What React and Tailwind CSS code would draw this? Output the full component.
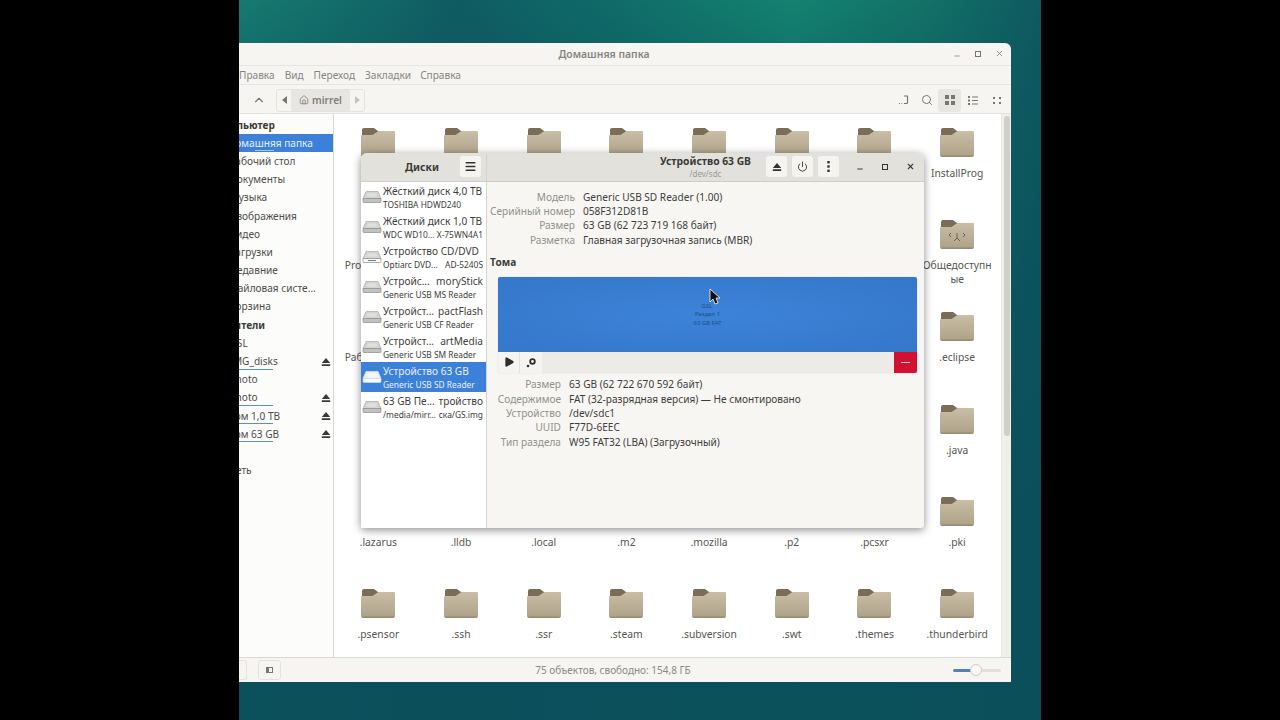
import React from "react";
import { Menu, Power, Search, House, ChevronUp, X, Minus, Play } from "lucide-react";

const Folder = ({ shared }) => (
  <svg width="36" height="32" viewBox="0 0 36 32" className="block">
    <defs>
      <linearGradient id="fb" x1="0" y1="0" x2="0" y2="1">
        <stop offset="0" stopColor="#c9bea6" />
        <stop offset="0.9" stopColor="#b0a48a" />
        <stop offset="1" stopColor="#8f856e" />
      </linearGradient>
    </defs>
    <path d="M2 3q0-2 2-2h10l4 3h15q1 0 1 1v6H2z" fill="#7a6d58" />
    <path d="M1 9q0-1 1-1h10q1 0 2-1l3-2q1-1 2-1h15q1 0 1 1v23q0 2-2 2H3q-2 0-2-2z" fill="url(#fb)" />
    {shared && (
      <g stroke="#6d6352" strokeWidth="1" fill="none">
        <path d="M12 14l-2 2 2 2M24 14l2 2-2 2M15 22l3-3 3 3M18 19v-5" />
      </g>
    )}
  </svg>
);

const Eject = ({ className = "" }) => (
  <svg width="10" height="10" viewBox="0 0 10 10" className={className}>
    <path d="M5 1l4.2 5H.8z M.8 7.2h8.4V9H.8z" fill="currentColor" />
  </svg>
);

const Drive = ({ cd, light }) => (
  <svg width="20" height="16" viewBox="0 0 20 16" className="shrink-0">
    <path d="M4 2.5h12l3 7H1z" fill={light ? "#eef0f2" : "#d4d4d0"} stroke={light ? "#dfe3e8" : "#a9a9a5"} strokeWidth="0.7" />
    <ellipse cx="10" cy="6" rx="5" ry="1.8" fill={light ? "#f7f7f7" : "#e0e0dd"} />
    <path d="M1 9.5h18v3q0 1-1 1H2q-1 0-1-1z" fill={cd ? "#fbfbfa" : light ? "#fafafa" : "#c2c2bf"} stroke={light ? "#cfd8e6" : "#8a8a87"} strokeWidth="0.7" />
    {cd && <path d="M6 11.5h8" stroke="#777" strokeWidth="1" />}
  </svg>
);

const folders = [
  ["", "", "", "", "", "", "", "InstallProg"],
  ["Programming", "", "", "", "", "", "", "Общедоступные"],
  ["Рабочий стол", "", "", "", "", "", "", ".eclipse"],
  ["", "", "", "", "", "", "", ".java"],
  [".lazarus", ".lldb", ".local", ".m2", ".mozilla", ".p2", ".pcsxr", ".pki"],
  [".psensor", ".ssh", ".ssr", ".steam", ".subversion", ".swt", ".themes", ".thunderbird"],
];

const side = [
  { t: "Компьютер", head: true },
  { t: "Домашняя папка", sel: true, bar: true },
  { t: "Рабочий стол" },
  { t: "Документы" },
  { t: "Музыка" },
  { t: "Изображения" },
  { t: "Видео" },
  { t: "Загрузки" },
  { t: "Недавние" },
  { t: "Файловая систе..." },
  { t: "Корзина" },
  { t: "Носители", head: true },
  { t: "GSL" },
  { t: "IMG_disks", eject: true, bar: true },
  { t: "Photo" },
  { t: "Photo", eject: true, bar: true },
  { t: "Том 1,0 ТВ", eject: true, bar: true },
  { t: "Том 63 GB", eject: true, bar: true },
  { t: "" },
  { t: "Сеть" },
];

const disks = [
  { a: ["Жёсткий диск 4,0 ТВ"], b: ["TOSHIBA HDWD240"] },
  { a: ["Жёсткий диск 1,0 ТВ"], b: ["WDC WD10...", "X-75WN4A1"] },
  { a: ["Устройство CD/DVD"], b: ["Optiarc DVD...", "AD-5240S"], k: "cd" },
  { a: ["Устройс...", "moryStick"], b: ["Generic USB MS Reader"] },
  { a: ["Устройст...", "pactFlash"], b: ["Generic USB CF Reader"] },
  { a: ["Устройст...", "artMedia"], b: ["Generic USB SM Reader"] },
  { a: ["Устройство 63 GB"], b: ["Generic USB SD Reader"], k: "sel" },
  { a: ["63 GB Пе...", "тройство"], b: ["/media/mirr...", "ска/GS.img"] },
];

const info1 = [
  ["Модель", "Generic USB SD Reader (1.00)"],
  ["Серийный номер", "058F312D81B"],
  ["Размер", "63 GB (62 723 719 168 байт)"],
  ["Разметка", "Главная загрузочная запись (MBR)"],
];
const info2 = [
  ["Размер", "63 GB (62 722 670 592 байт)"],
  ["Содержимое", "FAT (32-разрядная версия) — Не смонтировано"],
  ["Устройство", "/dev/sdc1"],
  ["UUID", "F77D-6EEC"],
  ["Тип раздела", "W95 FAT32 (LBA) (Загрузочный)"],
];

const HBtn = ({ children }) => (
  <div className="w-[21px] h-[21px] rounded-[3px] bg-[#f5f4f1] flex items-center justify-center text-[#33332f]">{children}</div>
);

export default function App() {
  return (
    <div className="h-screen w-full bg-black flex justify-center overflow-hidden font-['Noto_Sans',sans-serif] text-[10.1px] leading-[15px]">
      <div className="relative w-[802px] h-full overflow-hidden bg-[linear-gradient(180deg,rgba(10,78,90,0)_0%,rgba(10,78,90,0.25)_8%,rgba(10,78,90,0.95)_70%),linear-gradient(90deg,#167a70_0%,#0f5c62_27%,#0f6a68_45%,#148270_69%,#127268_85%,#0e5a60_100%)]">
        {/* Files window */}
        <div className="absolute left-[-42px] top-[43px] w-[814px] h-[639px] flex flex-col bg-[#f6f5f2] rounded-t-[6px] text-[#4a4a46]">
          <div className="h-[23px] shrink-0 relative flex items-center justify-center border-b border-[#e6e5e1]">
            <span className="font-semibold text-[10.4px] text-[#85857f] mt-[1px]">Домашняя папка</span>
            <div className="absolute right-[7px] top-[6px] flex items-center gap-[14px] text-[#77776f]">
              <Minus size={8} strokeWidth={2} className="translate-y-[2px]" />
              <div className="w-[6px] h-[6px] border border-[#77776f]" />
              <X size={9} strokeWidth={2} />
            </div>
          </div>
          <div className="h-[19px] shrink-0 flex items-center pl-[7px] pt-[1px] gap-[10px] text-[#85857f] border-b border-[#e6e5e1]">
            <span className="w-[25px]">Файл</span>
            <span>Правка</span>
            <span>Вид</span>
            <span>Переход</span>
            <span>Закладки</span>
            <span className="ml-[-1px]">Справка</span>
          </div>
          <div className="h-[29px] shrink-0 flex items-center pt-[2px] border-b border-[#e3e2de] relative">
            <ChevronUp size={14} className="ml-[55px] text-[#77776f] shrink-0" />
            <div className="ml-[10px] flex h-[23px] border border-[#e4e3df] rounded-[3px] text-[#7f7f79] shrink-0">
              <div className="w-[14px] flex items-center justify-center">
                <svg width="5" height="8" viewBox="0 0 5 8"><path d="M5 0v8L0 4z" fill="#77776f" /></svg>
              </div>
              <div className="w-[59px] bg-[#e7e6e2] flex items-center justify-center gap-[3px] font-semibold">
                <House size={10} /> <span>mirrel</span>
              </div>
              <div className="w-[14px] flex items-center justify-center">
                <svg width="5" height="8" viewBox="0 0 5 8"><path d="M0 0v8l5-4z" fill="#c4c4bf" /></svg>
              </div>
            </div>
            <div className="ml-auto mr-[2px] flex items-center text-[#77776f]">
              <div className="w-[23px] flex justify-center">
                <svg width="11" height="10" viewBox="0 0 11 10" fill="none" stroke="currentColor" strokeWidth="1.2"><path d="M6 1h3.5v6.5q0 1-1 1H6M1 8.5h1M3.5 8.5h.8" /></svg>
              </div>
              <div className="w-[23px] flex justify-center"><Search size={12} /></div>
              <div className="w-[23px] h-[23px] bg-[#e7e6e2] rounded-[3px] flex items-center justify-center">
                <svg width="10" height="10" viewBox="0 0 10 10" fill="currentColor"><rect width="4" height="4" /><rect x="6" width="4" height="4" /><rect y="6" width="4" height="4" /><rect x="6" y="6" width="4" height="4" /></svg>
              </div>
              <div className="w-[24px] flex justify-center">
                <svg width="10" height="9" viewBox="0 0 10 9" fill="currentColor"><rect width="2" height="2" /><rect y="3.5" width="2" height="2" /><rect y="7" width="2" height="2" /><rect x="4" y="0.5" width="6" height="1" /><rect x="4" y="4" width="6" height="1" /><rect x="4" y="7.5" width="6" height="1" /></svg>
              </div>
              <div className="w-[24px] flex justify-center">
                <svg width="8" height="7" viewBox="0 0 8 7" fill="currentColor"><rect width="2" height="2" /><rect x="6" width="2" height="2" /><rect y="5" width="2" height="2" /><rect x="6" y="5" width="2" height="2" /></svg>
              </div>
            </div>
          </div>
          <div className="flex-1 min-h-0 flex">
            <div className="w-[137px] shrink-0 bg-[#fcfcfb] border-r border-[#d9d8d4] pt-[2px] text-[#4d4d49]">
              {side.map((s, i) => (
                <div key={i} className={`h-[18.2px] relative flex items-center ${s.head ? "pl-[18px] font-bold text-[#3b3b38]" : s.sel ? "pl-[31px]" : "pl-[32.5px]"} ${s.sel ? "bg-[#3b80d9] text-[#e9f0fa]" : ""}`}>
                  <span className="whitespace-nowrap">{s.t}</span>
                  {s.bar && <div className={`absolute bottom-[1px] h-[1px] ${s.sel ? "left-[58px] w-[19px] bg-[#a9c6ee]" : "left-[31px] w-[45px] bg-[#5b8fc9]"}`} />}
                  {s.eject && <Eject className="absolute right-[2px] text-[#3a3a37]" />}
                </div>
              ))}
            </div>
            <div className="flex-1 relative bg-white overflow-hidden pl-[3px] pt-[6px]">
              <div className="grid grid-cols-[repeat(8,82.7px)] auto-rows-[92.2px]">
                {folders.flatMap((row, r) =>
                  row.map((label, c) => (
                    <div key={`${r}-${c}`} className="flex flex-col items-center pt-[7px]">
                      <Folder shared={r === 1 && c === 7} />
                      <div className="mt-[7px] w-[72px] text-center break-words text-[10.3px] text-[#55554f] leading-[14px]">{label}</div>
                    </div>
                  ))
                )}
              </div>
              <div className="absolute right-0 top-0 bottom-0 w-[10px] bg-[#f0efea] border-l border-[#e8e7e2]">
                <div className="mt-[2px] ml-[2px] w-[6px] h-[320px] rounded-[3px] bg-[#d0cfca]" />
              </div>
            </div>
          </div>
          <div className="h-[25px] shrink-0 flex items-center border-t border-[#d9d8d4] relative text-[#8a8a84]">
            <div className="ml-[42px] w-[8px] h-[20px] border border-l-0 border-[#e4e3df] rounded-r-[3px]" />
            <div className="ml-[11px] w-[23px] h-[20px] border border-[#e4e3df] rounded-[3px] flex items-center justify-center">
              <div className="w-[7px] h-[6px] border border-[#77776f] border-l-[3px]" />
            </div>
            <div className="ml-[254px] w-[156px] text-center whitespace-nowrap text-[10px]">75 объектов, свободно: 154,8 ГБ</div>
            <div className="ml-auto mr-[10px] w-[48px] h-[12px] flex items-center relative">
              <div className="w-[18px] h-[3px] bg-[#4f82bd] rounded-l" />
              <div className="flex-1 h-[3px] bg-[#e1e0dc] rounded-r" />
              <div className="absolute left-[17px] w-[12px] h-[12px] rounded-full bg-[#f8f8f6] border border-[#d0cfcb]" />
            </div>
          </div>
        </div>

        {/* Disks window */}
        <div className="absolute left-[122px] top-[153px] w-[563px] h-[375px] flex flex-col rounded-t-[6px] rounded-b-[3px] bg-[#f7f6f3] shadow-[0_2px_9px_rgba(0,0,0,0.45)] text-[#3d3d3a]">
          <div className="h-[29px] shrink-0 flex bg-[#e3e1dc] rounded-t-[6px] border-b border-[#cfcdc8]">
            <div className="w-[126px] shrink-0 relative flex items-center justify-center border-r border-[#d5d3ce]">
              <span className="font-bold text-[10.4px] text-[#3a3a37] mr-[3px]">Диски</span>
              <div className="absolute right-[5px] top-[3px]"><HBtn><Menu size={13} strokeWidth={2.6} /></HBtn></div>
            </div>
            <div className="flex-1 relative flex flex-col items-center pt-[1px]">
              <div className="font-bold text-[10.3px] text-[#3a3a37] leading-[14px]">Устройство 63 GB</div>
              <div className="text-[8px] leading-[12px] text-[#9a9a94]">/dev/sdc</div>
              <div className="absolute right-[9px] top-[3px] flex items-center">
                <div className="flex gap-[5px] mr-[16px]">
                  <HBtn><Eject /></HBtn>
                  <HBtn><Power size={11} strokeWidth={2} /></HBtn>
                  <HBtn>
                    <svg width="3" height="11" viewBox="0 0 3 11" fill="currentColor"><rect x="0.3" width="2.4" height="2.4" /><rect x="0.3" y="4.3" width="2.4" height="2.4" /><rect x="0.3" y="8.6" width="2.4" height="2.4" /></svg>
                  </HBtn>
                </div>
                <div className="w-[10px] flex justify-center"><Minus size={8} strokeWidth={3} className="translate-y-[2px]" /></div>
                <div className="w-[40px] flex justify-center"><div className="w-[6px] h-[6px] border-[1.5px] border-[#33332f]" /></div>
                <div className="w-[10px] flex justify-center"><X size={9} strokeWidth={3} /></div>
              </div>
            </div>
          </div>
          <div className="flex-1 min-h-0 flex">
            <div className="w-[126px] shrink-0 bg-white border-r border-[#d5d3ce]">
              {disks.map((d, i) => (
                <div key={i} className={`h-[30px] flex items-center pl-[1px] ${d.k === "sel" ? "bg-[#3b80d9] text-[#eaf1fb]" : ""}`}>
                  <Drive cd={d.k === "cd"} light={d.k === "sel"} />
                  <div className="ml-[1px] w-[100px] whitespace-nowrap">
                    <div className="leading-[14px] text-[10.1px] flex justify-between">
                      {d.a.map((x) => <span key={x}>{x}</span>)}
                    </div>
                    <div className="leading-[13px] text-[8.4px] flex justify-between">
                      {d.b.map((x) => <span key={x}>{x}</span>)}
                    </div>
                  </div>
                </div>
              ))}
            </div>
            <div className="flex-1 pt-[8px] pl-[3px] pr-[7px]">
              <div className="grid grid-cols-[85px_1fr] gap-x-[8px] auto-rows-[14.4px] items-center">
                {info1.map(([k, v]) => (
                  <React.Fragment key={k}>
                    <div className="text-right text-[#91918b] whitespace-nowrap">{k}</div>
                    <div className="whitespace-nowrap">{v}</div>
                  </React.Fragment>
                ))}
              </div>
              <div className="mt-[7px] font-bold leading-[15px]">Тома</div>
              <div className="mt-[7px] ml-[8px] w-[419px] rounded-[2px] overflow-hidden shadow-[0_0_1px_rgba(0,0,0,0.3)]">
                <div className="relative h-[75px] bg-[radial-gradient(ellipse_at_center,#3c83da_0%,#3577c8_100%)] flex flex-col items-center justify-center text-[6px] leading-[8.5px] text-[#1f4e88] pt-[1px]">
                  <span className="ml-[-1px]">GSL</span>
                  <span>Раздел 1</span>
                  <span>63 GB FAT</span>
                </div>
                <div className="h-[21px] bg-[#ecebe7] flex items-stretch">
                  <div className="w-[22px] bg-[#f5f4f1] border-r border-[#e3e2de] flex items-center justify-center text-[#2e2e2b]">
                    <Play size={10} fill="currentColor" strokeWidth={0} className="scale-125" />
                  </div>
                  <div className="w-[22px] bg-[#f5f4f1] flex items-center justify-center">
                    <svg width="11" height="11" viewBox="0 0 11 11" fill="none" stroke="#2e2e2b"><circle cx="6.5" cy="4.5" r="2.3" strokeWidth="1.8" /><circle cx="2" cy="9" r="1.3" fill="#2e2e2b" stroke="none" /></svg>
                  </div>
                  <div className="ml-auto w-[23px] bg-[#d40f34] flex items-center justify-center">
                    <div className="w-[9px] h-[1px] bg-[#f5c9d1]" />
                  </div>
                </div>
              </div>
              <div className="mt-[5px] grid grid-cols-[71px_1fr] gap-x-[8px] auto-rows-[14.4px] items-center">
                {info2.map(([k, v]) => (
                  <React.Fragment key={k}>
                    <div className="text-right text-[#91918b] whitespace-nowrap">{k}</div>
                    <div className="whitespace-nowrap">{v}</div>
                  </React.Fragment>
                ))}
              </div>
            </div>
          </div>
        </div>

        {/* Mouse pointer */}
        <svg width="12" height="17" viewBox="0 0 12 17" className="absolute left-[470px] top-[288px]">
          <path d="M1 1v13l3-3 2 5 3-1-2-5h4z" fill="#111" stroke="#fff" strokeWidth="0.8" />
        </svg>
      </div>
    </div>
  );
}
